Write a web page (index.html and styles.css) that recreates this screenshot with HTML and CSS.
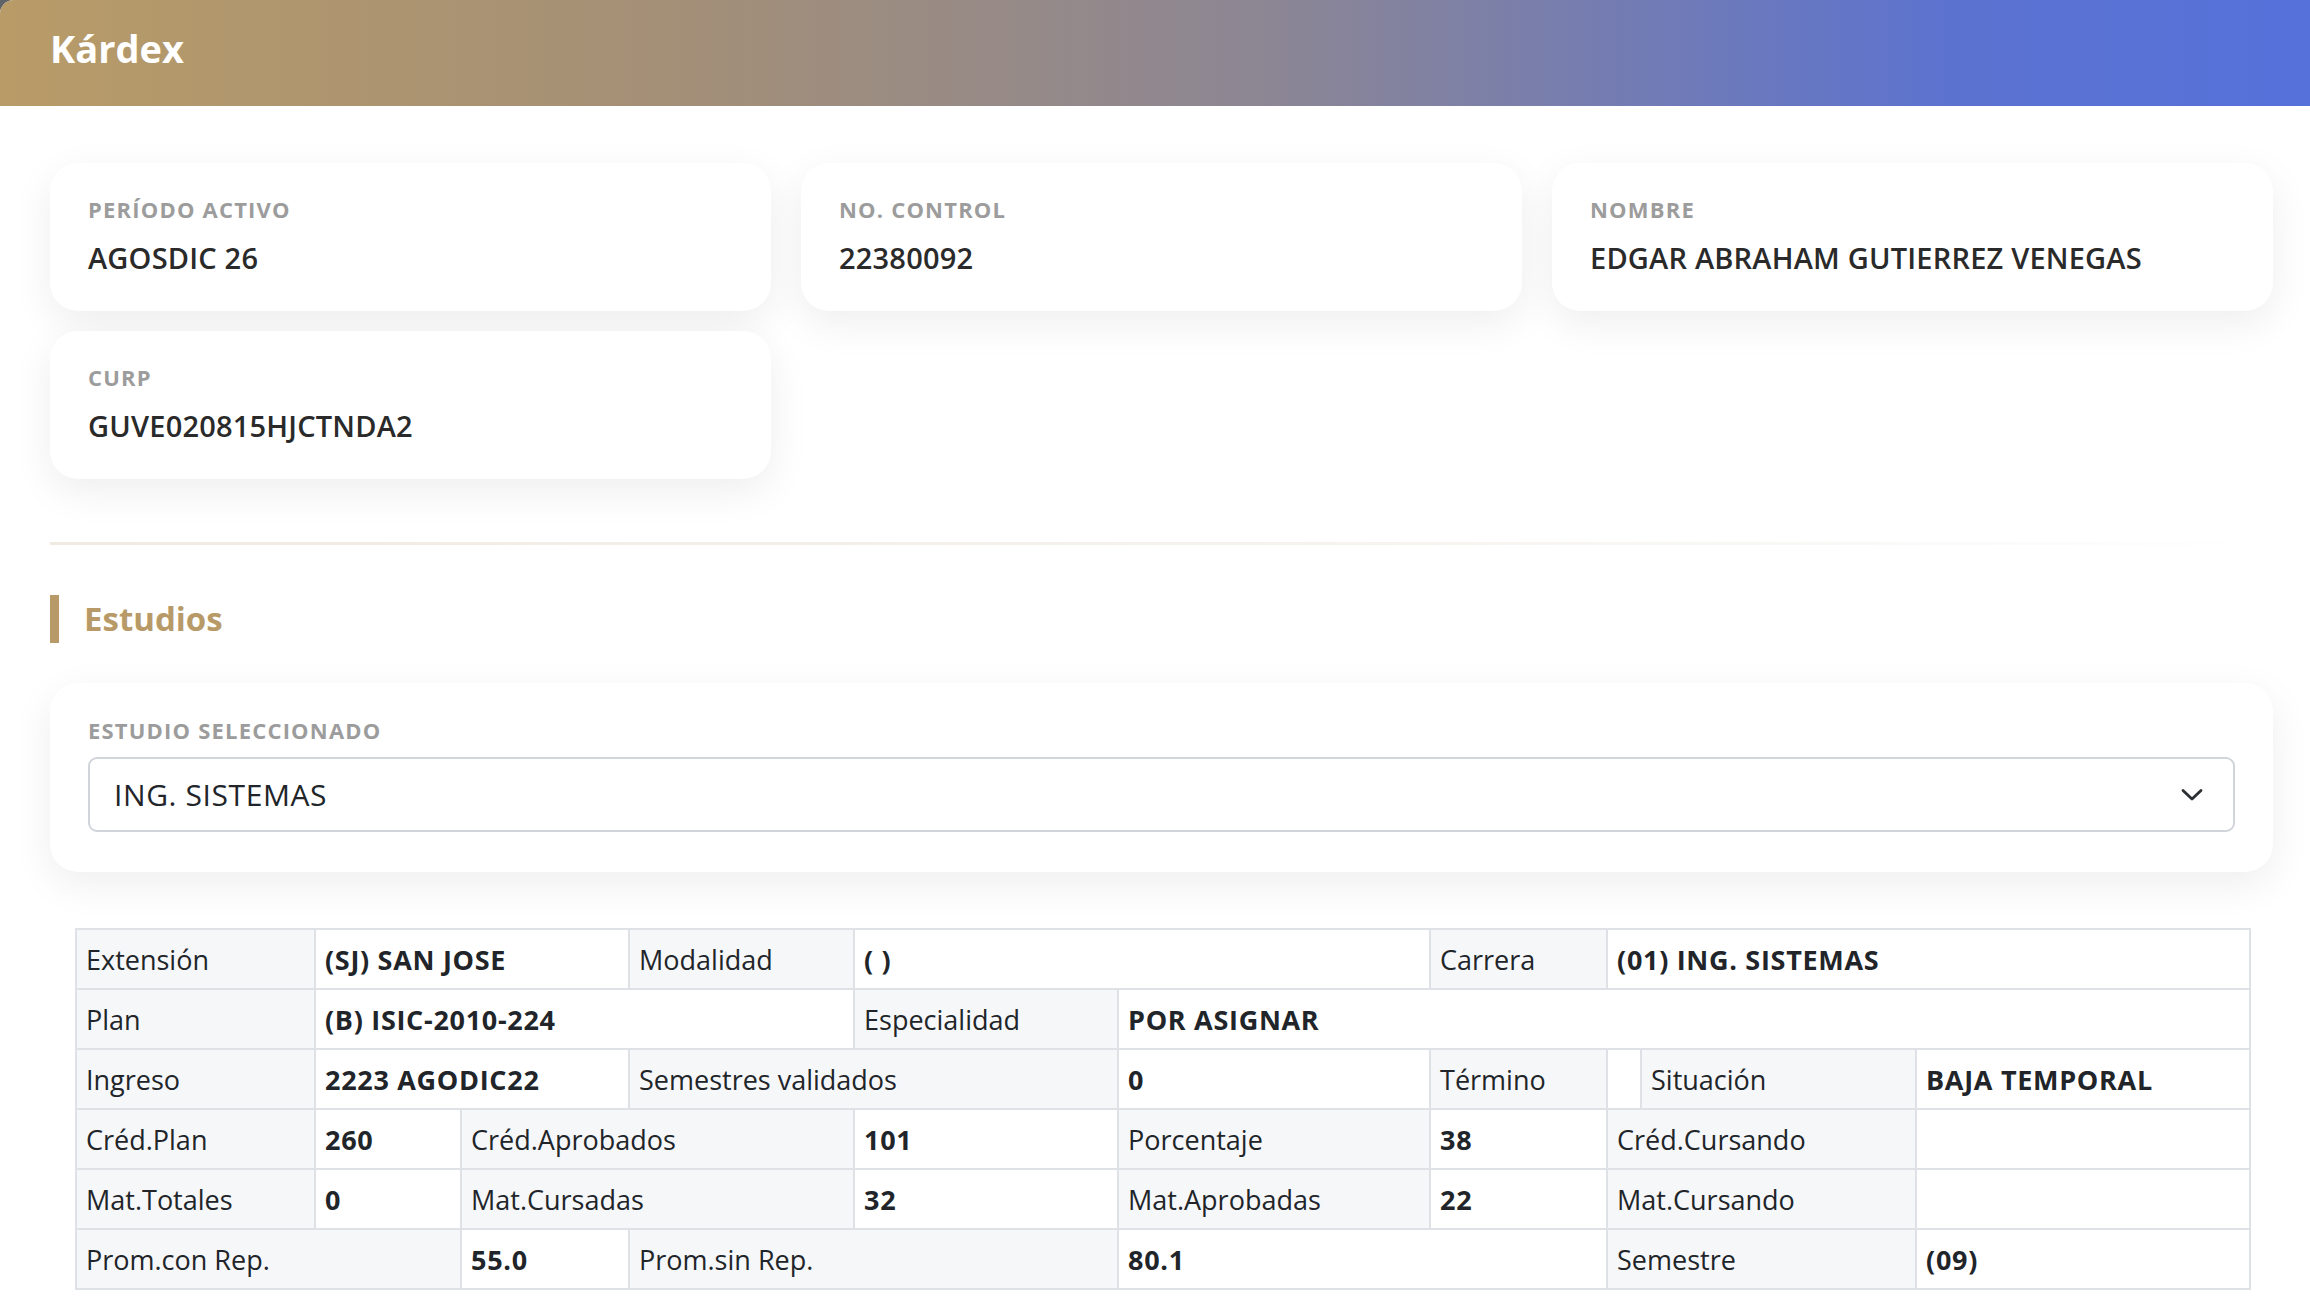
FILE: index.html
```html
<!DOCTYPE html>
<html lang="es">
<head>
    <meta charset="UTF-8">
    <meta name="viewport" content="width=device-width, initial-scale=1.0">
    <title>Kárdex</title>
    <link rel="stylesheet" href="styles.css">
</head>
<body>
<div class="page">

    <header class="page-header">
        <h1>Kárdex</h1>
    </header>

    <main class="content">
        <div class="info-grid">
            <div class="info-card">
                <span class="info-label">Período activo</span>
                <span class="info-value">AGOSDIC 26</span>
            </div>
            <div class="info-card">
                <span class="info-label">No. control</span>
                <span class="info-value">22380092</span>
            </div>
            <div class="info-card">
                <span class="info-label">Nombre</span>
                <span class="info-value">EDGAR ABRAHAM GUTIERREZ VENEGAS</span>
            </div>
            <div class="info-card">
                <span class="info-label">CURP</span>
                <span class="info-value">GUVE020815HJCTNDA2</span>
            </div>
        </div>

        <hr class="divider">

        <h2 class="section-title">Estudios</h2>

        <div class="select-card">
            <label class="info-label" for="estudio">Estudio seleccionado</label>
            <div class="select-box" id="estudio">
                <span>ING. SISTEMAS</span>
                <svg width="22" height="14" viewBox="0 0 22 14">
                    <path d="M2 2.5 L11 11 L20 2.5" fill="none" stroke="#2b2f33" stroke-width="2.8" stroke-linecap="round" stroke-linejoin="round"/>
                </svg>
            </div>
        </div>

        <table class="kardex">
            <colgroup>
                <col class="c1"><col class="c2"><col class="c3"><col class="c4"><col class="c5">
                <col class="c6"><col class="c7"><col class="c8"><col class="c9"><col class="c10">
            </colgroup>
            <tr>
                <td class="lbl">Extensión</td>
                <td colspan="2">(SJ) SAN JOSE</td>
                <td class="lbl">Modalidad</td>
                <td colspan="2">( )</td>
                <td class="lbl">Carrera</td>
                <td colspan="3">(01) ING. SISTEMAS</td>
            </tr>
            <tr>
                <td class="lbl">Plan</td>
                <td colspan="3">(B) ISIC-2010-224</td>
                <td class="lbl">Especialidad</td>
                <td colspan="5">POR ASIGNAR</td>
            </tr>
            <tr>
                <td class="lbl">Ingreso</td>
                <td colspan="2">2223 AGODIC22</td>
                <td class="lbl" colspan="2">Semestres validados</td>
                <td>0</td>
                <td class="lbl">Término</td>
                <td></td>
                <td class="lbl">Situación</td>
                <td>BAJA TEMPORAL</td>
            </tr>
            <tr>
                <td class="lbl">Créd.Plan</td>
                <td>260</td>
                <td class="lbl" colspan="2">Créd.Aprobados</td>
                <td>101</td>
                <td class="lbl">Porcentaje</td>
                <td>38</td>
                <td class="lbl" colspan="2">Créd.Cursando</td>
                <td></td>
            </tr>
            <tr>
                <td class="lbl">Mat.Totales</td>
                <td>0</td>
                <td class="lbl" colspan="2">Mat.Cursadas</td>
                <td>32</td>
                <td class="lbl">Mat.Aprobadas</td>
                <td>22</td>
                <td class="lbl" colspan="2">Mat.Cursando</td>
                <td></td>
            </tr>
            <tr>
                <td class="lbl" colspan="2">Prom.con Rep.</td>
                <td>55.0</td>
                <td class="lbl" colspan="2">Prom.sin Rep.</td>
                <td colspan="2">80.1</td>
                <td class="lbl" colspan="2">Semestre</td>
                <td>(09)</td>
            </tr>
        </table>
    </main>

</div>
</body>
</html>
```

FILE: styles.css
```css
html {
    background-color: #5f6266;
}
body {
    font-family: 'Open Sans', 'Liberation Sans', sans-serif;
    margin: 0;
    padding: 0;
    color: #2a2a2a;
}
.page {
    background-color: #fff;
    border-top-left-radius: 14px;
    min-height: 1310px;
    overflow: hidden;
}

/* Encabezado */
.page-header {
    height: 106px;
    display: flex;
    align-items: center;
    padding: 0 50px;
    background: linear-gradient(90deg, #b89b67 0%, #a38f78 30%, #8c8694 55%, #5b72d0 85%, #5571da 100%);
}
.page-header h1 {
    margin: 0;
    color: #fff;
    font-size: 38px;
    font-weight: 700;
    margin-top: -10px;
}

.content {
    padding: 57px 37px 0 50px;
}

/* Tarjetas de datos */
.info-grid {
    display: grid;
    grid-template-columns: repeat(3, 1fr);
    column-gap: 30px;
    row-gap: 20px;
}
.info-card {
    background-color: #fff;
    border-radius: 28px;
    box-shadow: 0 12px 40px rgba(0, 0, 0, 0.07);
    height: 148px;
    box-sizing: border-box;
    padding: 32px 38px 0;
    display: flex;
    flex-direction: column;
}
.info-label {
    font-size: 22px;
    font-weight: 700;
    color: #9c9c9c;
    text-transform: uppercase;
    letter-spacing: 1.2px;
    line-height: 28px;
}
.info-value {
    font-size: 29px;
    font-weight: 600;
    color: #2a2a2a;
    margin-top: 17px;
    line-height: 36px;
    letter-spacing: 0.2px;
}

.divider {
    border: none;
    height: 3px;
    background: linear-gradient(90deg, #f1eae2 0%, #f5f1ec 50%, #fbfaf8 85%, #fff 100%);
    margin: 63px 0 0;
}

.section-title {
    margin: 50px 0 0;
    height: 48px;
    border-left: 9px solid #b89a68;
    padding-left: 25px;
    font-size: 33px;
    font-weight: 700;
    color: #b89a68;
    line-height: 48px;
}

/* Selector de estudio */
.select-card {
    margin-top: 40px;
    background-color: #fff;
    border-radius: 28px;
    box-shadow: 0 12px 40px rgba(0, 0, 0, 0.07);
    padding: 33px 38px 40px;
    display: flex;
    flex-direction: column;
}
.select-box {
    margin-top: 13px;
    height: 75px;
    box-sizing: border-box;
    border: 2px solid #d1d5db;
    border-radius: 9px;
    display: flex;
    align-items: center;
    justify-content: space-between;
    padding: 0 30px 0 24px;
    font-size: 30px;
    letter-spacing: 0.6px;
    color: #212529;
}

/* Tabla del kárdex */
.kardex {
    margin: 56px 24px 0 25px;
    width: 2174px;
    table-layout: fixed;
    border-collapse: collapse;
    font-size: 27px;
    color: #212529;
}
.kardex .c1 { width: 239px; }
.kardex .c2 { width: 146px; }
.kardex .c3 { width: 168px; }
.kardex .c4 { width: 225px; }
.kardex .c5 { width: 264px; }
.kardex .c6 { width: 312px; }
.kardex .c7 { width: 177px; }
.kardex .c8 { width: 34px; }
.kardex .c9 { width: 275px; }
.kardex .c10 { width: 334px; }
.kardex td {
    border: 2px solid #dee2e6;
    height: 58px;
    padding: 0 9px;
    font-weight: 700;
    letter-spacing: 0.7px;
    white-space: nowrap;
    background-color: #fff;
}
.kardex td.lbl {
    font-weight: 400;
    letter-spacing: 0;
    background-color: #f6f7f9;
}
```
